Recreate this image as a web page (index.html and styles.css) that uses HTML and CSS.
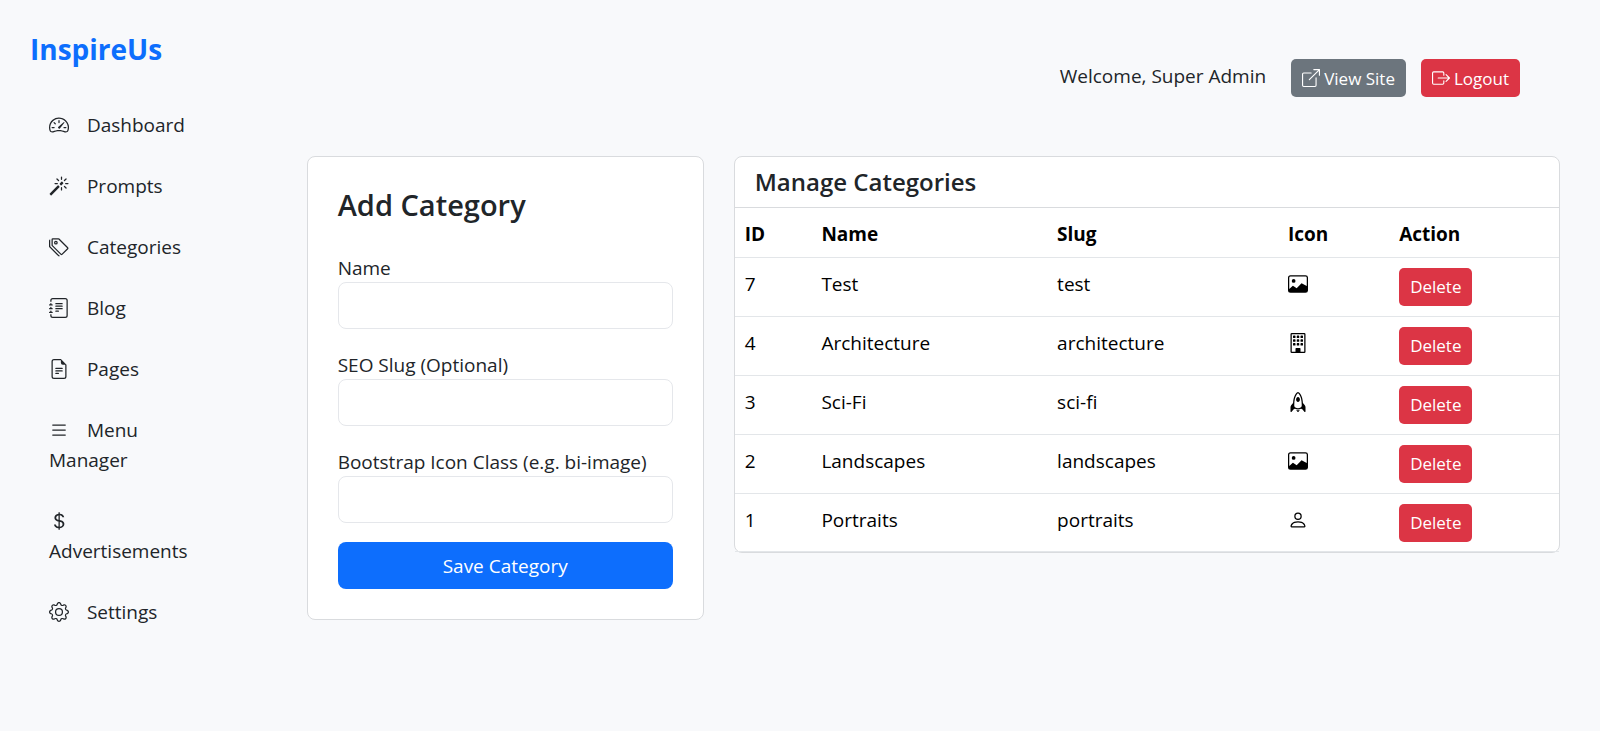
FILE: index.html
```html
<!DOCTYPE html>
<html lang="en">
<head>
<meta charset="utf-8">
<meta name="viewport" content="width=device-width, initial-scale=1">
<title>Manage Categories - InspireUs</title>
<link rel="stylesheet" href="styles.css">
</head>
<body>
<svg class="sprite" aria-hidden="true">
  <symbol id="speedometer" viewBox="0 0 16 16"><path d="M8 4a.5.5 0 0 1 .5.5V6a.5.5 0 0 1-1 0V4.5A.5.5 0 0 1 8 4zM3.732 5.732a.5.5 0 0 1 .707 0l.915.914a.5.5 0 1 1-.708.708l-.914-.915a.5.5 0 0 1 0-.707zM2 10a.5.5 0 0 1 .5-.5h1.586a.5.5 0 0 1 0 1H2.5A.5.5 0 0 1 2 10zm9.5 0a.5.5 0 0 1 .5-.5h1.5a.5.5 0 0 1 0 1H12a.5.5 0 0 1-.5-.5zm.754-4.246a.389.389 0 0 0-.527-.02L7.547 9.31a.91.91 0 1 0 1.302 1.258l3.434-4.297a.389.389 0 0 0-.029-.518z"/><path fill-rule="evenodd" d="M0 10a8 8 0 1 1 15.547 2.661c-.442 1.253-1.845 1.602-2.932 1.25C11.309 13.488 9.475 13 8 13c-1.474 0-3.31.488-4.615.911-1.087.352-2.49.003-2.932-1.25A7.988 7.988 0 0 1 0 10zm8-7a7 7 0 0 0-6.603 9.329c.203.575.923.876 1.68.63C4.397 12.533 6.358 12 8 12s3.604.532 4.923.96c.757.245 1.477-.056 1.68-.631A7 7 0 0 0 8 3z"/></symbol>
  <symbol id="magic" viewBox="0 0 16 16"><path d="M9.5 2.672a.5.5 0 1 0 1 0V.843a.5.5 0 0 0-1 0v1.829Zm4.5.035A.5.5 0 0 0 13.293 2L12 3.293a.5.5 0 1 0 .707.707L14 2.707ZM7.293 4A.5.5 0 1 0 8 3.293L6.707 2A.5.5 0 0 0 6 2.707L7.293 4Zm-.621 2.5a.5.5 0 1 0 0-1H4.843a.5.5 0 1 0 0 1h1.829Zm8.485 0a.5.5 0 1 0 0-1h-1.829a.5.5 0 0 0 0 1h1.829ZM13.293 10A.5.5 0 1 0 14 9.293L12.707 8a.5.5 0 1 0-.707.707L13.293 10ZM9.5 11.157a.5.5 0 0 0 1 0V9.328a.5.5 0 0 0-1 0v1.829Zm1.854-5.097a.5.5 0 0 0 0-.706l-.708-.708a.5.5 0 0 0-.707 0L8.646 5.94a.5.5 0 0 0 0 .707l.708.708a.5.5 0 0 0 .707 0l1.293-1.293Zm-3 3a.5.5 0 0 0 0-.706l-.708-.708a.5.5 0 0 0-.707 0L.646 13.94a.5.5 0 0 0 0 .707l.707.707a.5.5 0 0 0 .707 0L8.354 9.06Z"/></symbol>
  <symbol id="tags" viewBox="0 0 16 16"><path d="M3 2v4.586l7 7L14.586 9l-7-7H3zM2 2a1 1 0 0 1 1-1h4.586a1 1 0 0 1 .707.293l7 7a1 1 0 0 1 0 1.414l-4.586 4.586a1 1 0 0 1-1.414 0l-7-7A1 1 0 0 1 2 6.586V2z"/><path d="M5.5 5a.5.5 0 1 1 0-1 .5.5 0 0 1 0 1zm0 1a1.5 1.5 0 1 0 0-3 1.5 1.5 0 0 0 0 3zM1 7.086a1 1 0 0 0 .293.707L8.75 15.25l-.043.043a1 1 0 0 1-1.414 0l-7-7A1 1 0 0 1 0 7.586V3a1 1 0 0 1 1-1v5.086z"/></symbol>
  <symbol id="journal" viewBox="0 0 16 16"><path d="M5 10.5a.5.5 0 0 1 .5-.5h2a.5.5 0 0 1 0 1h-2a.5.5 0 0 1-.5-.5zm0-2a.5.5 0 0 1 .5-.5h5a.5.5 0 0 1 0 1h-5a.5.5 0 0 1-.5-.5zm0-2a.5.5 0 0 1 .5-.5h5a.5.5 0 0 1 0 1h-5a.5.5 0 0 1-.5-.5zm0-2a.5.5 0 0 1 .5-.5h5a.5.5 0 0 1 0 1h-5a.5.5 0 0 1-.5-.5z"/><path d="M3 0h10a2 2 0 0 1 2 2v12a2 2 0 0 1-2 2H3a2 2 0 0 1-2-2v-1h1v1a1 1 0 0 0 1 1h10a1 1 0 0 0 1-1V2a1 1 0 0 0-1-1H3a1 1 0 0 0-1 1v1H1V2a2 2 0 0 1 2-2z"/><path d="M1 5v-.5a.5.5 0 0 1 1 0V5h.5a.5.5 0 0 1 0 1h-2a.5.5 0 0 1 0-1H1zm0 3v-.5a.5.5 0 0 1 1 0V8h.5a.5.5 0 0 1 0 1h-2a.5.5 0 0 1 0-1H1zm0 3v-.5a.5.5 0 0 1 1 0v.5h.5a.5.5 0 0 1 0 1h-2a.5.5 0 0 1 0-1H1z"/></symbol>
  <symbol id="file" viewBox="0 0 16 16"><path d="M5.5 7a.5.5 0 0 0 0 1h5a.5.5 0 0 0 0-1h-5zM5 9.5a.5.5 0 0 1 .5-.5h5a.5.5 0 0 1 0 1h-5a.5.5 0 0 1-.5-.5zm0 2a.5.5 0 0 1 .5-.5h2a.5.5 0 0 1 0 1h-2a.5.5 0 0 1-.5-.5z"/><path d="M9.5 0H4a2 2 0 0 0-2 2v12a2 2 0 0 0 2 2h8a2 2 0 0 0 2-2V4.5L9.5 0zm0 1v2A1.5 1.5 0 0 0 11 4.5h2V14a1 1 0 0 1-1 1H4a1 1 0 0 1-1-1V2a1 1 0 0 1 1-1h5.5z"/></symbol>
  <symbol id="list" viewBox="0 0 16 16"><path d="M2.5 12a.5.5 0 0 1 .5-.5h10a.5.5 0 0 1 0 1H3a.5.5 0 0 1-.5-.5zm0-4a.5.5 0 0 1 .5-.5h10a.5.5 0 0 1 0 1H3a.5.5 0 0 1-.5-.5zm0-4a.5.5 0 0 1 .5-.5h10a.5.5 0 0 1 0 1H3a.5.5 0 0 1-.5-.5z"/></symbol>
  <symbol id="dollar" viewBox="0 0 16 16"><path d="M4 10.781c.148 1.667 1.513 2.85 3.591 3.003V15h1.043v-1.216c2.27-.179 3.678-1.438 3.678-3.3 0-1.59-.947-2.51-2.956-3.028l-.722-.187V3.467c1.122.11 1.879.714 2.07 1.616h1.47c-.166-1.6-1.54-2.748-3.54-2.875V1H7.591v1.233c-1.939.23-3.27 1.472-3.27 3.156 0 1.454.966 2.483 2.661 2.917l.61.162v4.031c-1.149-.17-1.94-.8-2.131-1.718H4zm3.391-3.836c-1.043-.263-1.6-.825-1.6-1.616 0-.944.704-1.641 1.8-1.828v3.495l-.2-.05zm1.591 1.872c1.287.323 1.852.859 1.852 1.769 0 1.097-.826 1.828-2.2 1.939V8.73l.348.086z"/></symbol>
  <symbol id="gear" viewBox="0 0 16 16"><path d="M8 4.754a3.246 3.246 0 1 0 0 6.492 3.246 3.246 0 0 0 0-6.492zM5.754 8a2.246 2.246 0 1 1 4.492 0 2.246 2.246 0 0 1-4.492 0z"/><path d="M9.796 1.343c-.527-1.79-3.065-1.79-3.592 0l-.094.319a.873.873 0 0 1-1.255.52l-.292-.16c-1.64-.892-3.433.902-2.54 2.541l.159.292a.873.873 0 0 1-.52 1.255l-.319.094c-1.79.527-1.79 3.065 0 3.592l.319.094a.873.873 0 0 1 .52 1.255l-.16.292c-.892 1.64.901 3.434 2.541 2.54l.292-.159a.873.873 0 0 1 1.255.52l.094.319c.527 1.79 3.065 1.79 3.592 0l.094-.319a.873.873 0 0 1 1.255-.52l.292.16c1.64.893 3.434-.902 2.54-2.541l-.159-.292a.873.873 0 0 1 .52-1.255l.319-.094c1.79-.527 1.79-3.065 0-3.592l-.319-.094a.873.873 0 0 1-.52-1.255l.16-.292c.893-1.64-.902-3.433-2.541-2.54l-.292.159a.873.873 0 0 1-1.255-.52l-.094-.319zm-2.633.283c.246-.835 1.428-.835 1.674 0l.094.319a1.873 1.873 0 0 0 2.693 1.115l.291-.16c.764-.415 1.6.42 1.184 1.185l-.159.292a1.873 1.873 0 0 0 1.116 2.692l.318.094c.835.246.835 1.428 0 1.674l-.319.094a1.873 1.873 0 0 0-1.115 2.693l.16.291c.415.764-.42 1.6-1.185 1.184l-.291-.159a1.873 1.873 0 0 0-2.693 1.116l-.094.318c-.246.835-1.428.835-1.674 0l-.094-.319a1.873 1.873 0 0 0-2.692-1.115l-.292.16c-.764.415-1.6-.42-1.184-1.185l.159-.291A1.873 1.873 0 0 0 1.945 8.93l-.319-.094c-.835-.246-.835-1.428 0-1.674l.319-.094A1.873 1.873 0 0 0 3.06 4.377l-.16-.292c-.415-.764.42-1.6 1.185-1.184l.292.159a1.873 1.873 0 0 0 2.692-1.115l.094-.319z"/></symbol>
  <symbol id="open" viewBox="0 0 16 16"><path d="M8.636 3.5a.5.5 0 0 0-.5-.5H1.5A1.5 1.5 0 0 0 0 4.5v10A1.5 1.5 0 0 0 1.5 16h10a1.5 1.5 0 0 0 1.5-1.5V7.864a.5.5 0 0 0-1 0V14.5a.5.5 0 0 1-.5.5h-10a.5.5 0 0 1-.5-.5v-10a.5.5 0 0 1 .5-.5h6.636a.5.5 0 0 0 .5-.5z"/><path d="M16 .5a.5.5 0 0 0-.5-.5h-5a.5.5 0 0 0 0 1h3.793L6.146 9.146a.5.5 0 1 0 .708.708L15 1.707V5.5a.5.5 0 0 0 1 0v-5z"/></symbol>
  <symbol id="exit" viewBox="0 0 16 16"><path d="M10 12.5a.5.5 0 0 1-.5.5h-8a.5.5 0 0 1-.5-.5v-9a.5.5 0 0 1 .5-.5h8a.5.5 0 0 1 .5.5v2a.5.5 0 0 0 1 0v-2A1.5 1.5 0 0 0 9.5 2h-8A1.5 1.5 0 0 0 0 3.5v9A1.5 1.5 0 0 0 1.5 14h8a1.5 1.5 0 0 0 1.5-1.5v-2a.5.5 0 0 0-1 0v2z"/><path d="M15.854 8.354a.5.5 0 0 0 0-.708l-3-3a.5.5 0 0 0-.708.708L14.293 7.5H5.5a.5.5 0 0 0 0 1h8.793l-2.147 2.146a.5.5 0 0 0 .708.708l3-3z"/></symbol>
  <symbol id="image" viewBox="0 0 16 16"><path d="M6.002 5.5a1.5 1.5 0 1 1-3 0 1.5 1.5 0 0 1 3 0z"/><path d="M2.002 1a2 2 0 0 0-2 2v10a2 2 0 0 0 2 2h12a2 2 0 0 0 2-2V3a2 2 0 0 0-2-2h-12zm12 1a1 1 0 0 1 1 1v6.5l-3.777-1.947a.5.5 0 0 0-.577.093l-3.71 3.71-2.66-1.772a.5.5 0 0 0-.63.062L1.002 12V3a1 1 0 0 1 1-1h12z"/></symbol>
  <symbol id="building" viewBox="0 0 16 16"><path d="M4 2.500a.5.5 0 0 1 .5-.5h1a.5.5 0 0 1 .5.5v1a.5.5 0 0 1-.5.5h-1a.5.5 0 0 1-.5-.5zm3 0a.5.5 0 0 1 .5-.5h1a.5.5 0 0 1 .5.5v1a.5.5 0 0 1-.5.5h-1a.5.5 0 0 1-.5-.5zm3.500-.5a.5.5 0 0 0-.5.5v1a.5.5 0 0 0 .5.5h1a.5.5 0 0 0 .5-.5v-1a.5.5 0 0 0-.5-.5zM4 5.500a.5.5 0 0 1 .5-.5h1a.5.5 0 0 1 .5.5v1a.5.5 0 0 1-.5.5h-1a.5.5 0 0 1-.5-.5zM7.500 5a.5.5 0 0 0-.5.5v1a.5.5 0 0 0 .5.5h1a.5.5 0 0 0 .5-.5v-1a.5.5 0 0 0-.5-.5zm2.500.5a.5.5 0 0 1 .5-.5h1a.5.5 0 0 1 .5.5v1a.5.5 0 0 1-.5.5h-1a.5.5 0 0 1-.5-.5zM4.500 8a.5.5 0 0 0-.5.5v1a.5.5 0 0 0 .5.5h1a.5.5 0 0 0 .5-.5v-1a.5.5 0 0 0-.5-.5zm2.500.5a.5.5 0 0 1 .5-.5h1a.5.5 0 0 1 .5.5v1a.5.5 0 0 1-.5.5h-1a.5.5 0 0 1-.5-.5zm3.500-.5a.5.5 0 0 0-.5.5v1a.5.5 0 0 0 .5.5h1a.5.5 0 0 0 .5-.5v-1a.5.5 0 0 0-.5-.5z"/><path fill-rule="evenodd" d="M2 1a1 1 0 0 1 1-1h10a1 1 0 0 1 1 1v14a1 1 0 0 1-1 1H3a1 1 0 0 1-1-1zm11 0H3v14h3v-2.500a.5.5 0 0 1 .5-.5h3a.5.5 0 0 1 .5.5V15h3z"/></symbol>
  <symbol id="rocket" viewBox="0 0 16 16"><path d="M8 8c.828 0 1.500-.895 1.500-2S8.828 4 8 4s-1.500.895-1.500 2S7.172 8 8 8Z"/><path d="M11.953 8.810c-.195-3.388-.968-5.507-1.777-6.819C9.707 1.233 9.230.751 8.857.454a3.495 3.495 0 0 0-.463-.315A2.190 2.190 0 0 0 8.250.064.546.546 0 0 0 8 0a.549.549 0 0 0-.266.073 2.312 2.312 0 0 0-.142.080 3.670 3.670 0 0 0-.459.330c-.370.308-.844.803-1.310 1.570-.805 1.322-1.577 3.433-1.774 6.756l-1.497 1.826-.004.005A2.500 2.500 0 0 0 2 12.202V15.500a.5.5 0 0 0 .9.3l1.125-1.500c.166-.222.420-.4.752-.570.214-.108.414-.192.625-.281l.198-.084c.7.428 1.550.635 2.400.635.850 0 1.700-.207 2.400-.635.067.030.132.056.196.083.213.090.413.174.627.282.332.170.586.348.752.570l1.125 1.500a.5.5 0 0 0 .9-.3v-3.298a2.500 2.500 0 0 0-.548-1.562l-1.499-1.830ZM12 10.445v.055c0 .866-.284 1.585-.750 2.140.146.064.292.130.425.199.390.197.8.460 1.100.860L13 14v-1.798a1.500 1.500 0 0 0-.327-.935L12 10.445ZM4.750 12.640C4.284 12.085 4 11.366 4 10.500v-.054l-.673.820a1.500 1.500 0 0 0-.327.936V14l.225-.3c.3-.4.710-.664 1.100-.861.133-.068.279-.135.425-.199ZM8.009 1.073c.063.040.140.094.226.163.284.226.683.621 1.090 1.280C10.137 3.836 11 6.237 11 10.500c0 .858-.374 1.480-.943 1.893C9.517 12.786 8.781 13 8 13c-.781 0-1.517-.214-2.057-.607C5.373 11.979 5 11.358 5 10.500c0-4.182.860-6.586 1.677-7.928.409-.670.810-1.082 1.096-1.320.090-.076.170-.135.236-.180Z"/><path d="M9.479 14.361c-.480.093-.980.139-1.479.139-.5 0-.999-.046-1.479-.139L7.600 15.800a.5.5 0 0 0 .8 0l1.079-1.439Z"/></symbol>
  <symbol id="person" viewBox="0 0 16 16"><path d="M8 8a3 3 0 1 0 0-6 3 3 0 0 0 0 6Zm2-3a2 2 0 1 1-4 0 2 2 0 0 1 4 0Zm4 8c0 1-1 1-1 1H3s-1 0-1-1 1-4 6-4 6 3 6 4Zm-1-.004c-.001-.246-.154-.986-.832-1.664C11.516 10.680 10.289 10 8 10c-2.290 0-3.516.680-4.168 1.332-.678.678-.830 1.418-.832 1.664h10Z"/></symbol>
</svg>
<div class="layout">
  <aside class="sidebar">
    <a class="brand" href="#">InspireUs</a>
    <nav class="nav">
      <a class="nav-link" href="#"><svg class="icon"><use href="#speedometer"/></svg> Dashboard</a>
      <a class="nav-link" href="#"><svg class="icon"><use href="#magic"/></svg> Prompts</a>
      <a class="nav-link" href="#"><svg class="icon"><use href="#tags"/></svg> Categories</a>
      <a class="nav-link" href="#"><svg class="icon"><use href="#journal"/></svg> Blog</a>
      <a class="nav-link" href="#"><svg class="icon"><use href="#file"/></svg> Pages</a>
      <a class="nav-link" href="#"><svg class="icon"><use href="#list"/></svg> Menu Manager</a>
      <a class="nav-link" href="#"><svg class="icon"><use href="#dollar"/></svg> Advertisements</a>
      <a class="nav-link" href="#"><svg class="icon"><use href="#gear"/></svg> Settings</a>
    </nav>
  </aside>
  <main class="main">
    <header class="topbar">
      <span class="welcome">Welcome, Super Admin</span>
      <a class="btn btn-sm btn-secondary" href="#"><svg class="icon"><use href="#open"/></svg>View Site</a>
      <a class="btn btn-sm btn-danger" href="#"><svg class="icon"><use href="#exit"/></svg>Logout</a>
    </header>
    <div class="columns">
      <section class="card form-card">
        <h1 class="form-title">Add Category</h1>
        <form class="form">
          <div class="fields">
            <div class="field">
              <label for="name">Name</label>
              <input class="input" id="name" type="text">
            </div>
            <div class="field">
              <label for="slug">SEO Slug (Optional)</label>
              <input class="input" id="slug" type="text">
            </div>
            <div class="field">
              <label for="icon">Bootstrap Icon Class (e.g. bi-image)</label>
              <input class="input" id="icon" type="text">
            </div>
          </div>
          <button class="btn btn-primary" type="button">Save Category</button>
        </form>
      </section>
      <section class="card">
        <h2 class="card-header">Manage Categories</h2>
        <table class="table">
          <thead>
            <tr><th class="col-id">ID</th><th class="col-name">Name</th><th class="col-slug">Slug</th><th class="col-icon">Icon</th><th>Action</th></tr>
          </thead>
          <tbody>
            <tr><td>7</td><td>Test</td><td>test</td><td><svg class="icon"><use href="#image"/></svg></td><td><button class="btn btn-sm btn-danger" type="button">Delete</button></td></tr>
            <tr><td>4</td><td>Architecture</td><td>architecture</td><td><svg class="icon"><use href="#building"/></svg></td><td><button class="btn btn-sm btn-danger" type="button">Delete</button></td></tr>
            <tr><td>3</td><td>Sci-Fi</td><td>sci-fi</td><td><svg class="icon"><use href="#rocket"/></svg></td><td><button class="btn btn-sm btn-danger" type="button">Delete</button></td></tr>
            <tr><td>2</td><td>Landscapes</td><td>landscapes</td><td><svg class="icon"><use href="#image"/></svg></td><td><button class="btn btn-sm btn-danger" type="button">Delete</button></td></tr>
            <tr><td>1</td><td>Portraits</td><td>portraits</td><td><svg class="icon"><use href="#person"/></svg></td><td><button class="btn btn-sm btn-danger" type="button">Delete</button></td></tr>
          </tbody>
        </table>
      </section>
    </div>
  </main>
</div>
</body>
</html>
```
FILE: styles.css
```css
* { box-sizing: border-box; }

body {
  margin: 0;
  background: #f8f9fb;
  color: #212529;
  font: 400 19px/30px "Segoe UI", "Open Sans", "Noto Sans", sans-serif;
}

.sprite { display: none; }

.icon {
  width: 20px;
  height: 20px;
  fill: currentColor;
  vertical-align: -3px;
}

.layout {
  display: grid;
  grid-template-columns: 1fr 5fr;
  min-height: 100vh;
}

.sidebar { padding: 31px 30px; }

.brand {
  display: block;
  color: #0d6efd;
  font-size: 28px;
  font-weight: 700;
  line-height: 36px;
  text-decoration: none;
}

.nav {
  display: flex;
  flex-direction: column;
  gap: 1px;
  margin-top: 28px;
}

.nav-link {
  display: block;
  padding: 15px 19px;
  color: inherit;
  text-decoration: none;
}

.nav-link .icon { margin-right: 13px; }

.main { padding: 59px 40px 40px; }

.topbar {
  display: flex;
  justify-content: flex-end;
  align-items: flex-start;
  gap: 15px;
  padding-right: 40px;
  margin-bottom: 59px;
}

.welcome {
  margin-right: 10px;
  padding-top: 2px;
}

.columns {
  display: grid;
  grid-template-columns: minmax(0, 397fr) minmax(0, 826fr);
  align-items: start;
  gap: 30px;
}

.card {
  background: #fff;
  border: 1px solid #d9dbde;
  border-radius: 8px;
}

.form-card { padding: 30px; }

.form-title {
  margin: 0 0 32px;
  font-size: 29px;
  font-weight: 600;
  line-height: 36px;
}

.form {
  display: flex;
  flex-direction: column;
  gap: 19px;
}

.fields {
  display: flex;
  flex-direction: column;
  gap: 23px;
}

.field {
  display: flex;
  flex-direction: column;
  line-height: 27px;
}

.input {
  width: 100%;
  height: 47px;
  padding: 8px 15px;
  background: #fff;
  border: 1px solid #e5e7eb;
  border-radius: 8px;
  font: inherit;
}

.btn {
  display: inline-block;
  padding: 9px 15px 8px;
  border: 0;
  border-radius: 8px;
  color: #fff;
  font: inherit;
  text-align: center;
  text-decoration: none;
}

.btn-sm {
  padding: 6px 11px 4px;
  border-radius: 5px;
  font-size: 17px;
  line-height: 28px;
}

.btn-sm .icon {
  width: 18px;
  height: 18px;
  margin-right: 4px;
  vertical-align: -2px;
}

.btn-primary { background: #0d6efd; }
.btn-secondary { background: #6c757d; }
.btn-danger { background: #dc3545; }

.card-header {
  margin: 0;
  padding: 10px 20px;
  border-bottom: 1px solid #d9dbde;
  font-size: 24px;
  font-weight: 600;
  line-height: 30px;
}

.table {
  width: 100%;
  table-layout: fixed;
  border-spacing: 0;
  color: #000;
}

.table th,
.table td {
  padding: 10px;
  border-bottom: 1px solid #e3e6e9;
  text-align: left;
  vertical-align: top;
  line-height: 32px;
}

.table th {
  padding-bottom: 8px;
  font-weight: 700;
}

.table tr:last-child td { padding-bottom: 9px; }
.table tr:last-child th { padding-bottom: 7px; }

.table .btn {
  display: block;
  padding: 5px 11px;
  line-height: 28px;
}

.col-id { width: 9.3%; }
.col-name { width: 28.6%; }
.col-slug { width: 28%; }
.col-icon { width: 13.5%; }
```
